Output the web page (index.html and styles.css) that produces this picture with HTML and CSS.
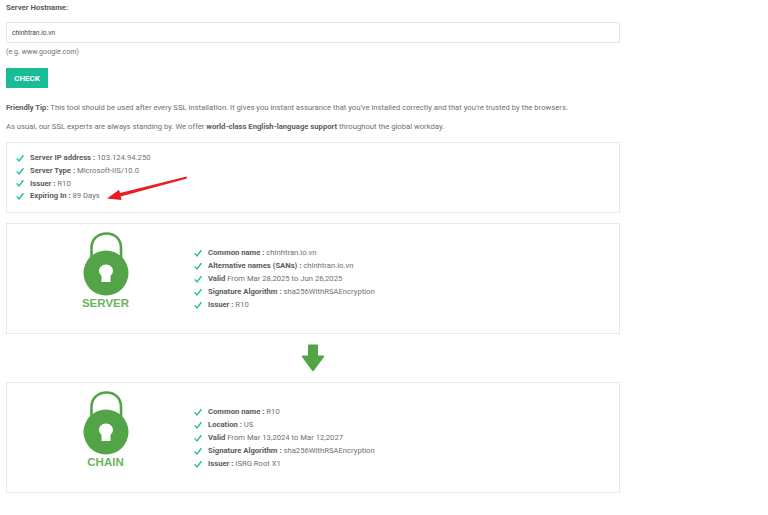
FILE: index.html
```html
<!DOCTYPE html>
<html lang="en">
<head>
<meta charset="utf-8">
<title>SSL Checker</title>
<link rel="stylesheet" href="styles.css">
</head>
<body>
<svg class="defs" width="0" height="0" aria-hidden="true">
  <symbol id="check" viewBox="0 0 8 8"><path d="M.7 4.400 3 6.900 7.400 1.200" fill="none" stroke="#1fbf9c" stroke-width="1.400"/></symbol>
  <symbol id="lock" viewBox="0 0 46 64"><path d="M8.500 27V16C8.500 7 15 1.500 23.500 1.500S38 7 38 16V27" fill="none" stroke="#52a447" stroke-width="2.600"/><circle cx="23" cy="41" r="22.500" fill="#52a447"/><path d="M18.500 50V44.500C18.500 43 17 42.500 16.500 41.200 14.800 37 18 32.500 23 32.500S31.200 37 29.500 41.200C29 42.500 27.500 43 27.500 44.500V50Z" fill="#fff"/></symbol>
</svg>
<main class="page">
  <label class="label" for="host">Server Hostname:</label>
  <input class="input" id="host" type="text" value="chinhtran.io.vn">
  <p class="hint">(e.g. www.google.com)</p>
  <button class="btn" type="button">CHECK</button>
  <p class="tip"><b>Friendly Tip:</b> This tool should be used after every SSL installation. It gives you instant assurance that you've installed correctly and that you're trusted by the browsers.</p>
  <p class="tip second">As usual, our SSL experts are always standing by. We offer <b>world-class English-language support</b> throughout the global workday.</p>

  <section class="box summary">
    <ul class="list">
      <li><svg class="tick"><use href="#check"/></svg><span><b>Server IP address :</b> 103.124.94.250</span></li>
      <li><svg class="tick"><use href="#check"/></svg><span><b>Server Type :</b> Microsoft-IIS/10.0</span></li>
      <li><svg class="tick"><use href="#check"/></svg><span><b>Issuer :</b> R10</span></li>
      <li><svg class="tick"><use href="#check"/></svg><span><b>Expiring In :</b> 89 Days</span></li>
    </ul>
    <svg class="annot" viewBox="0 0 82 26" aria-hidden="true"><path d="M80.500 .5 14 17 13 13.700 1 22.500 15.500 24 14.700 20.500 81 2.500Z" fill="#ec1c24"/></svg>
  </section>

  <section class="box cert">
    <div class="badge">
      <svg class="lock"><use href="#lock"/></svg>
      <div class="badge-name">SERVER</div>
    </div>
    <ul class="list">
      <li><svg class="tick"><use href="#check"/></svg><span><b>Common name :</b> chinhtran.io.vn</span></li>
      <li><svg class="tick"><use href="#check"/></svg><span><b>Alternative names (SANs) :</b> chinhtran.io.vn</span></li>
      <li><svg class="tick"><use href="#check"/></svg><span><b>Valid</b> From Mar 28,2025 to Jun 26,2025</span></li>
      <li><svg class="tick"><use href="#check"/></svg><span><b>Signature Algorithm :</b> sha256WithRSAEncryption</span></li>
      <li><svg class="tick"><use href="#check"/></svg><span><b>Issuer :</b> R10</span></li>
    </ul>
  </section>

  <div class="down">
    <svg width="24" height="28" viewBox="0 0 24 28" aria-hidden="true"><path d="M7 1.500Q7 .5 8 .5H16Q17 .5 17 1.500V11.500H22.500Q24 11.500 23 13L13 26.500Q12 27.800 11 26.500L1 13Q0 11.500 1.500 11.500H7Z" fill="#52a447"/></svg>
  </div>

  <section class="box cert">
    <div class="badge">
      <svg class="lock"><use href="#lock"/></svg>
      <div class="badge-name">CHAIN</div>
    </div>
    <ul class="list">
      <li><svg class="tick"><use href="#check"/></svg><span><b>Common name :</b> R10</span></li>
      <li><svg class="tick"><use href="#check"/></svg><span><b>Location :</b> US</span></li>
      <li><svg class="tick"><use href="#check"/></svg><span><b>Valid</b> From Mar 13,2024 to Mar 12,2027</span></li>
      <li><svg class="tick"><use href="#check"/></svg><span><b>Signature Algorithm :</b> sha256WithRSAEncryption</span></li>
      <li><svg class="tick"><use href="#check"/></svg><span><b>Issuer :</b> ISRG Root X1</span></li>
    </ul>
  </section>
</main>
</body>
</html>
```
FILE: styles.css
```css
* { box-sizing: border-box; }
html, body { margin: 0; padding: 0; background: #fff; }
body { font-family: Roboto, "Liberation Sans", sans-serif; font-size: 7.680px; line-height: 13px; color: #707070; overflow: hidden; height: 515px; }
b { font-weight: 700; color: #5c5c5c; }
p { margin: 0; }
.defs { position: absolute; }
.page { width: 614px; margin-left: 6px; display: flex; flex-direction: column; padding-top: 1px; }
.label { font-weight: 700; color: #5c5c5c; height: 21px; }
.input { display: block; width: 100%; height: 21px; border: 1px solid #e4e4e4; border-radius: 2px; padding: 0 5px; font: 6.600px Roboto, sans-serif; color: #444; background: #fff; outline: none; }
.hint { margin-top: 2px; height: 13px; font-size: 7.100px; }
.btn { width: 42px; height: 20px; margin-top: 10px; border: 0; padding: 0; background: #1abc96; color: #fff; font: 700 8px Roboto, sans-serif; }
.tip { margin-top: 13px; }
.tip.second { margin-top: 6px; }
.box { border: 1px solid #e8e8e8; background: #fff; }
.summary { position: relative; height: 71px; margin-top: 9px; padding: 8px 9px; }
.cert { height: 111px; display: flex; align-items: center; }
.summary + .cert { margin-top: 10px; }
.list { list-style: none; margin: 0; padding: 0; }
.list li { display: flex; align-items: center; height: 12.800px; }
.tick { width: 8px; height: 8px; margin-right: 6px; margin-top: 1px; flex: none; }
.annot { position: absolute; left: 99px; top: 33px; width: 82px; height: 26px; }
.badge { width: 187px; flex: none; display: flex; flex-direction: column; align-items: center; padding-left: 10px; margin-bottom: 16px; }
.lock { width: 46px; height: 64px; display: block; }
.badge-name { font: 700 11.500px/12px "Liberation Sans", sans-serif; color: #6cb35f; margin-top: 1px; }
.down { height: 48px; display: flex; justify-content: center; align-items: center; }
```
